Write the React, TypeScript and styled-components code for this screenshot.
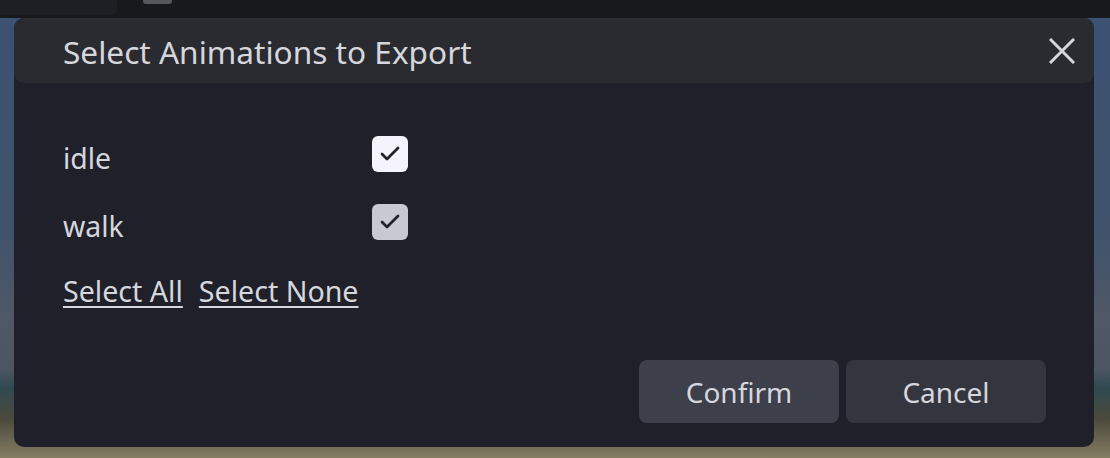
import styled, { createGlobalStyle } from 'styled-components';
import { Check } from 'lucide-react';
import { Fragment } from 'react';

const GlobalStyle = createGlobalStyle`
  html, body {
    margin: 0;
    padding: 0;
    background: #18191d;
    font-family: 'Noto Sans', 'Open Sans', sans-serif;
  }
`;

const Page = styled.div`
  width: 1110px;
  height: 458px;
  display: flex;
  flex-direction: column;
  overflow: hidden;
`;

const TopBar = styled.div`
  height: 18px;
  flex: none;
  display: flex;
  align-items: flex-start;
  background: #18191d;
`;

const Tab = styled.div`
  width: 117px;
  height: 15px;
  background: #1e1f24;
  border-bottom-right-radius: 6px;
`;

const TabStub = styled.div`
  margin-left: 26px;
  width: 29px;
  height: 4px;
  background: #56575d;
  border-radius: 0 0 3px 3px;
`;

const Scene = styled.div`
  flex: 1;
  display: flex;
  align-items: flex-start;
  padding-left: 14px;
  background: linear-gradient(
    180deg,
    #3c5272 0%,
    #41536b 50%,
    #4f5866 68%,
    #4c5562 80%,
    #2f4a50 84%,
    #4c493d 91%,
    #857e63 100%
  );
`;

const Dialog = styled.div`
  width: 1080px;
  height: 429px;
  background: #1f2029;
  border-radius: 10px;
  display: flex;
  flex-direction: column;
  color: #d6d6dd;
`;

const Header = styled.div`
  height: 65px;
  flex: none;
  display: flex;
  align-items: center;
  justify-content: space-between;
  padding: 2px 19px 0 49px;
  box-sizing: border-box;
  background: #2a2b31;
  border-radius: 10px;
`;

const Title = styled.h2`
  margin: 0;
  font-size: 31.6px;
  font-weight: 400;
`;

const CloseButton = styled.button`
  border: 0;
  padding: 0;
  margin-top: -2px;
  background: none;
  display: flex;
  color: #d6d6dd;
  cursor: pointer;
`;

const Body = styled.div`
  flex: 1;
  display: flex;
  flex-direction: column;
  padding: 53px 48px 24px 49px;
`;

const List = styled.div`
  display: grid;
  grid-template-columns: 309px 36px;
  row-gap: 32px;
  align-items: start;
`;

const Label = styled.span`
  height: 36px;
  font-size: 28.4px;
  line-height: 44px;
`;

const Box = styled.span<{ $dim?: boolean }>`
  width: 36px;
  height: 36px;
  border-radius: 6px;
  display: flex;
  align-items: center;
  justify-content: center;
  background: ${(p) => (p.$dim ? '#c9c9d2' : '#f5f4fc')};
  color: #22232b;
`;

const Links = styled.div`
  display: flex;
  gap: 16px;
  margin-top: 33px;
`;

const TextLink = styled.a`
  font-size: 28.6px;
  line-height: 36px;
  color: #d6d6dd;
  text-decoration: underline;
  text-underline-offset: 4px;
  text-decoration-thickness: 2px;
  cursor: pointer;
`;

const Footer = styled.div`
  margin-top: auto;
  display: flex;
  justify-content: flex-end;
  gap: 7px;
`;

const Button = styled.button<{ $active?: boolean }>`
  width: 200px;
  height: 63px;
  border: 0;
  border-radius: 8px;
  background: ${(p) => (p.$active ? '#3d3f4b' : '#34363f')};
  color: #d6d6dd;
  font-family: inherit;
  font-size: 28px;
  cursor: pointer;
`;

const animations = [
  { name: 'idle', dim: false },
  { name: 'walk', dim: true },
];

export default function App() {
  return (
    <Page>
      <GlobalStyle />
      <TopBar>
        <Tab />
        <TabStub />
      </TopBar>
      <Scene>
        <Dialog>
          <Header>
            <Title>Select Animations to Export</Title>
            <CloseButton aria-label="Close">
              <svg width="26" height="26" viewBox="0 0 26 26">
                <path d="M1 1 25 25M25 1 1 25" stroke="currentColor" strokeWidth="3" fill="none" />
              </svg>
            </CloseButton>
          </Header>
          <Body>
            <List>
              {animations.map((a) => (
                <Fragment key={a.name}>
                  <Label>{a.name}</Label>
                  <Box $dim={a.dim}>
                    <Check size={24} strokeWidth={2.8} />
                  </Box>
                </Fragment>
              ))}
            </List>
            <Links>
              <TextLink>Select All</TextLink>
              <TextLink>Select None</TextLink>
            </Links>
            <Footer>
              <Button $active>Confirm</Button>
              <Button>Cancel</Button>
            </Footer>
          </Body>
        </Dialog>
      </Scene>
    </Page>
  );
}
